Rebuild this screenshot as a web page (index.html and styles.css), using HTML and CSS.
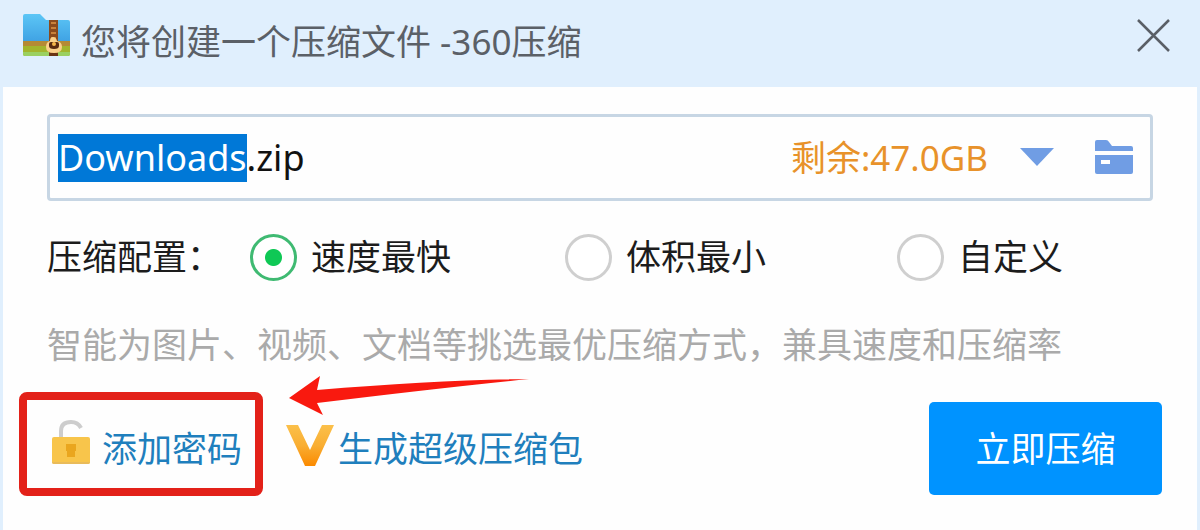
FILE: index.html
```html
<!DOCTYPE html>
<html lang="zh-CN">

<head>
    <meta charset="UTF-8">
    <meta name="viewport" content="width=device-width, initial-scale=1.0">
    <title>您将创建一个压缩文件 -360压缩</title>
    <link rel="stylesheet" href="styles.css">
</head>

<body>

    <header class="titlebar">
        <svg class="app-icon" width="48" height="44" viewBox="0 0 48 44" aria-hidden="true">
            <defs>
                <linearGradient id="folderBlue" x1="0" y1="0" x2="0" y2="1">
                    <stop offset="0" stop-color="#5cc6f6"/>
                    <stop offset="1" stop-color="#3d9fe2"/>
                </linearGradient>
            </defs>
            <path d="M0 2q0-2 2-2h15l6 6h22q2 0 2 2v22H0z" fill="url(#folderBlue)"/>
            <path d="M0 27h47v7H0z" fill="#b58a35"/>
            <path d="M0 32h47v8q0 2-2 2H2q-2 0-2-2z" fill="#a3b52c"/>
            <path d="M0 38h47v2q0 2-2 2H2q-2 0-2-2z" fill="#9bd060"/>
            <path d="M26 6h9v36h-9z" fill="#8a4a1c"/>
            <path d="M28 9h5M28 14h5M28 19h5M28 24h5" stroke="#c8813a" stroke-width="2"/>
            <path d="M30 23q3 0 4 4 5 1 5 6 0 6-8 6t-8-6q0-5 4-6 0-4 3-4z" fill="#fbd08a"/>
            <path d="M26 30q0-2 2-2h6q2 0 2 2v2q0 3-5 3t-5-3z" fill="#5b2a10"/>
            <circle cx="31" cy="30" r="2" fill="#f7b64b"/>
            <path d="M26 39h9v3h-9z" fill="#6b3413"/>
        </svg>
        <h1>您将创建一个压缩文件 -360压缩</h1>
        <button type="button" class="close" aria-label="关闭">
            <svg width="44" height="44" viewBox="0 0 44 44" aria-hidden="true">
                <path d="M7 6l31 31M38 6L7 37" stroke="#5a5f66" stroke-width="2.500" fill="none"/>
            </svg>
        </button>
    </header>

    <main class="content">
        <div class="file-field">
            <input type="text" id="fileName" class="file-name" value="Downloads.zip" aria-label="文件名" spellcheck="false" autocomplete="off">
            <span class="space-left">剩余:47.0GB</span>
            <button type="button" class="history" aria-label="历史路径">
                <svg width="34" height="19" viewBox="0 0 34 19" aria-hidden="true">
                    <path d="M0 0h34L17 18z" fill="#709de4"/>
                </svg>
            </button>
            <button type="button" class="browse" aria-label="更改目录">
                <svg width="38" height="35" viewBox="0 0 38 35" aria-hidden="true">
                    <path d="M0 2q0-2 2-2h9q2 0 3 2l3 4h19q2 0 2 2v3H0z" fill="#709de4"/>
                    <path d="M0 15h38v17q0 2-2 2H2q-2 0-2-2z" fill="#709de4"/>
                    <path d="M6 20h9v4H6z" fill="#fff"/>
                </svg>
            </button>
        </div>

        <div class="options" role="radiogroup" aria-labelledby="configLabel">
            <span id="configLabel">压缩配置：</span>
            <label><input type="radio" name="config" checked>速度最快</label>
            <label><input type="radio" name="config">体积最小</label>
            <label><input type="radio" name="config">自定义</label>
        </div>

        <p class="hint">智能为图片、视频、文档等挑选最优压缩方式，兼具速度和压缩率</p>

        <div class="footer">
            <a href="#" class="add-password">
                <svg width="38" height="44" viewBox="0 0 38 44" aria-hidden="true">
                    <path d="M9 18v-7q0-9 10-9 7 0 10 6" fill="none" stroke="#cdcdcd" stroke-width="4"/>
                    <rect x="0" y="17" width="38" height="27" rx="2" fill="#f8c54b"/>
                    <path d="M0 42h38q0 2-2 2H2q-2 0-2-2z" fill="#e9bb5a"/>
                    <path d="M14 24h10v7h-1v6h-8v-6h-1z" fill="#eaa61e"/>
                </svg>
                添加密码
            </a>
            <a href="#" class="super-zip">
                <svg width="48" height="41" viewBox="0 0 48 41" aria-hidden="true">
                    <defs>
                        <linearGradient id="vipGold" x1="0" y1="0" x2="0" y2="1">
                            <stop offset="0" stop-color="#fbc04a"/>
                            <stop offset="0.500" stop-color="#f9ae33"/>
                            <stop offset="1" stop-color="#fb8a00"/>
                        </linearGradient>
                    </defs>
                    <path d="M0 0h12l12 25L36 0h12L29 41H19z" fill="url(#vipGold)"/>
                </svg>
                生成超级压缩包
            </a>
            <button type="button" class="submit">立即压缩</button>
            <svg class="arrow" width="240" height="40" viewBox="0 0 240 40" aria-hidden="true">
                <path d="M0 22L31 0L28 14Q150 4 240 3Q150 12 28 27L34 39Z" fill="#f9190f"/>
            </svg>
        </div>
    </main>

    <script>
        // select the name without its extension
        const fileName = document.getElementById('fileName');
        fileName.focus();
        fileName.setSelectionRange(0, fileName.value.lastIndexOf('.'));
    </script>

</body>

</html>
```
FILE: styles.css
```css
* {
    box-sizing: border-box;
}

body {
    margin: 0;
    min-height: 100vh;
    display: flex;
    flex-direction: column;
    font-family: "Noto Sans", "Noto Sans CJK SC", sans-serif;
    font-size: 35px;
    line-height: 48px;
    color: #1c1c1c;
    background-color: #e0effd;
}

svg {
    display: block;
    flex: none;
}

button,
input {
    font: inherit;
    margin: 0;
}

button {
    padding: 0;
    border: none;
    background: none;
    cursor: pointer;
}

.titlebar {
    display: flex;
    align-items: flex-start;
    gap: 10px;
    padding: 14px 25px 17px 23px;
}

.titlebar h1 {
    flex: 1;
    margin: 0;
    font-size: 35px;
    font-weight: normal;
    line-height: 56px;
    color: #5b6067;
}

.content {
    flex: 1;
    margin: 0 3px;
    padding: 27px 35px 32px 44px;
    background-color: #fefefe;
}

.file-field {
    display: flex;
    align-items: center;
    height: 87px;
    margin-right: 9px;
    padding: 0 17px 0 8px;
    border: 3px solid #c7d6e4;
    border-radius: 4px;
}

.file-name {
    flex: 1;
    min-width: 0;
    height: 48px;
    padding: 0;
    border: none;
    outline: none;
    font-size: 36px;
    color: #111;
    background: none;
}

.file-name::selection {
    color: #fff;
    background-color: #0078d7;
}

.space-left {
    margin-right: 32px;
    color: #e8922a;
}

.history {
    margin-right: 41px;
}

.options {
    display: grid;
    grid-template-columns: 203fr 315fr 332fr 256fr;
    align-items: center;
    margin: 32px 9px 0 0;
    white-space: nowrap;
}

.options label {
    display: flex;
    align-items: center;
    gap: 14px;
}

.options input {
    appearance: none;
    width: 47px;
    height: 47px;
    border: 3px solid #cfcfcf;
    border-radius: 50%;
    background-color: #fff;
}

.options input:checked {
    border-color: #3fba72;
    background: radial-gradient(circle, #0fc855 8px, #fff 9px);
}

.hint {
    margin: 40px 0 0;
    color: #aaa;
}

.footer {
    position: relative;
    display: flex;
    margin-top: 33px;
}

.footer a {
    display: flex;
    align-items: center;
    color: #1f7fbd;
    text-decoration: none;
}

.add-password {
    position: relative;
    gap: 12px;
    margin-right: 44px;
    padding-left: 5px;
}

.add-password svg {
    margin-bottom: 14px;
}

/* red frame around the password link */
.add-password::after {
    content: "";
    position: absolute;
    inset: -10px -21px -1px -28px;
    border: 8px solid #e32119;
    border-radius: 8px;
}

.super-zip {
    gap: 4px;
}

.super-zip svg {
    margin-bottom: 6px;
}

.submit {
    width: 233px;
    height: 93px;
    margin-left: auto;
    border-radius: 5px;
    color: #fff;
    background-color: #0093ff;
}

.arrow {
    position: absolute;
    top: -26px;
    left: 242px;
}
```
